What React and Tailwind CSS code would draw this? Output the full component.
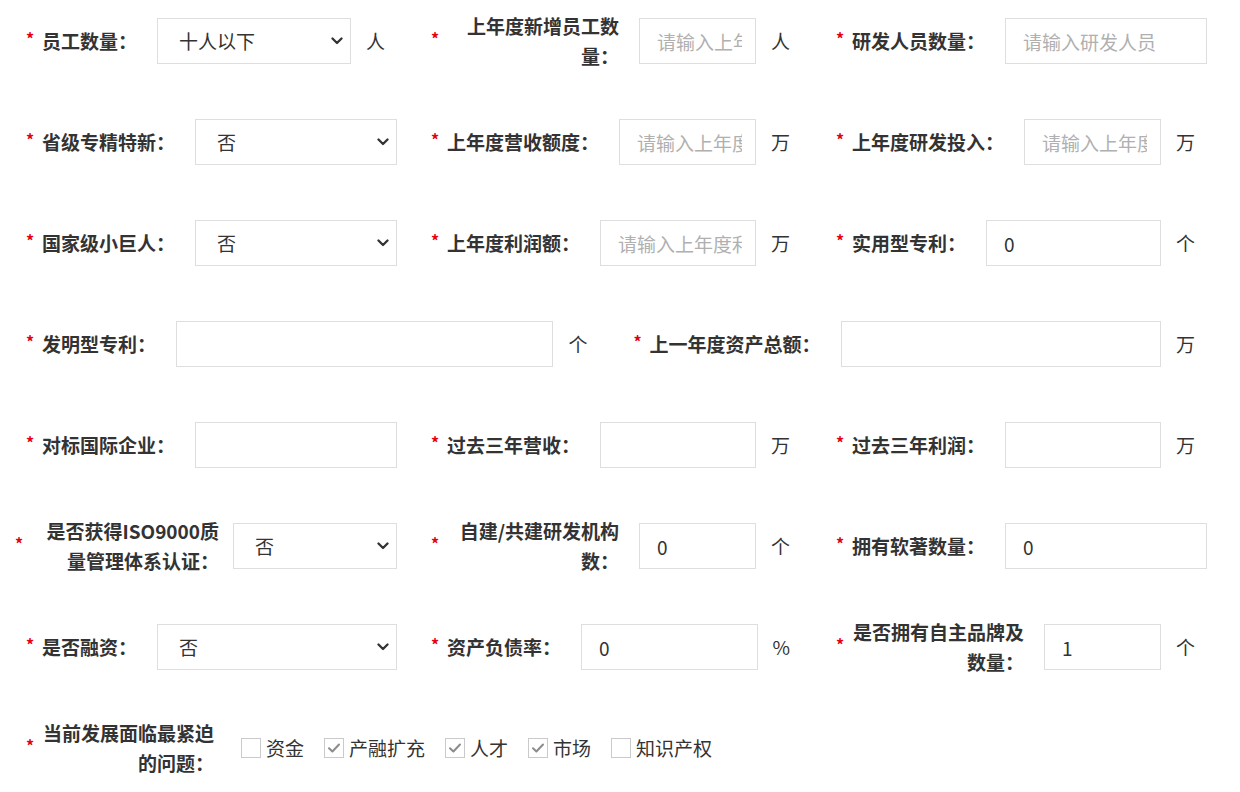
import React, { useState } from 'react';

const FONT = { fontFamily: '"Noto Sans CJK SC", "Noto Sans", sans-serif' };

const rows = [
  [
    { label: '员工数量：', type: 'select', value: '十人以下', options: ['十人以下', '十到五十人', '五十人以上'], unit: '人' },
    { label: '上年度新增员工数量：', placeholder: '请输入上年度新增员工数量', unit: '人' },
    { label: '研发人员数量：', placeholder: '请输入研发人员' },
  ],
  [
    { label: '省级专精特新：', type: 'select', value: '否', options: ['否', '是'] },
    { label: '上年度营收额度：', placeholder: '请输入上年度营收额度', unit: '万' },
    { label: '上年度研发投入：', placeholder: '请输入上年度研发投入', unit: '万' },
  ],
  [
    { label: '国家级小巨人：', type: 'select', value: '否', options: ['否', '是'] },
    { label: '上年度利润额：', placeholder: '请输入上年度利润额', unit: '万' },
    { label: '实用型专利：', value: '0', unit: '个' },
  ],
  [
    { label: '发明型专利：', value: '', unit: '个' },
    { label: '上一年度资产总额：', value: '', unit: '万' },
  ],
  [
    { label: '对标国际企业：', value: '' },
    { label: '过去三年营收：', value: '', unit: '万' },
    { label: '过去三年利润：', value: '', unit: '万' },
  ],
  [
    // long label: pushed a little wider than the others
    { label: '是否获得ISO9000质量管理体系认证：', type: 'select', value: '否', options: ['否', '是'], wide: true },
    { label: '自建/共建研发机构数：', value: '0', unit: '个' },
    { label: '拥有软著数量：', value: '0' },
  ],
  [
    { label: '是否融资：', type: 'select', value: '否', options: ['否', '是'] },
    { label: '资产负债率：', value: '0', unit: '%' },
    { label: '是否拥有自主品牌及数量：', value: '1', unit: '个' },
  ],
];

const ISSUES = [
  { name: '资金', checked: false },
  { name: '产融扩充', checked: true },
  { name: '人才', checked: true },
  { name: '市场', checked: true },
  { name: '知识产权', checked: false },
];

function Required({ wide }) {
  return (
    <span
      className={
        'w-[13px] shrink-0 -translate-x-[3px] text-[16px] font-bold leading-none text-[#e60012] -mt-[6px]' +
        (wide ? ' -ml-[11px]' : '')
      }
    >
      *
    </span>
  );
}

function Label({ children, wide }) {
  return (
    <label
      className={
        'shrink-0 text-right text-[19px] font-bold leading-[30px] text-[#333] ' +
        (wide ? 'max-w-[188px]' : 'max-w-[172px]')
      }
    >
      {children}
    </label>
  );
}

function Field({ f }) {
  const [val, setVal] = useState(f.value ?? '');

  return (
    <div className="flex min-w-0 flex-1 items-center">
      <Required wide={f.wide} />
      <Label wide={f.wide}>{f.label}</Label>
      <div className={'relative h-[46px] min-w-0 flex-1 ' + (f.wide ? 'ml-[14px]' : 'ml-[20px]')}>
        {f.type === 'select' ? (
          <>
            <select
              value={val}
              onChange={(e) => setVal(e.target.value)}
              className="h-full w-full appearance-none border border-[#dedede] bg-white pl-[21px] pr-[30px] text-[19px] text-[#333] outline-none"
            >
              {f.options.map((o) => <option key={o} value={o}>{o}</option>)}
            </select>
            <svg className="pointer-events-none absolute right-[8px] top-1/2 -translate-y-1/2" width="12" height="8" viewBox="0 0 12 8" fill="none">
              <path d="M1.5 1.5L6 6l4.5-4.5" stroke="#333" strokeWidth="2.3" strokeLinecap="round" strokeLinejoin="round" />
            </svg>
          </>
        ) : (
          <input
            value={val}
            onChange={(e) => setVal(e.target.value)}
            placeholder={f.placeholder}
            className="h-full w-full border border-[#dedede] bg-white pl-[17px] pr-[13px] text-[19px] text-[#333] outline-none placeholder:text-[#b0b0b0]"
          />
        )}
      </div>
      {f.unit && <span className="shrink-0 pl-[15px] pr-[12px] text-[19px] text-[#333]">{f.unit}</span>}
    </div>
  );
}

function IssueBox({ item }) {
  const [on, setOn] = useState(item.checked);
  return (
    <label className="flex cursor-pointer items-center gap-[5px]" onClick={() => setOn(!on)}>
      <span className="flex h-[20px] w-[20px] items-center justify-center border border-[#cacaca] bg-white">
        {on && (
          <svg width="14" height="12" viewBox="0 0 14 12" fill="none">
            <path d="M2 6.2l3.4 3.3L12 2.5" stroke="#8c8c8c" strokeWidth="2" strokeLinecap="round" strokeLinejoin="round" />
          </svg>
        )}
      </span>
      <span className="text-[19px] text-[#333]">{item.name}</span>
    </label>
  );
}

export default function App() {
  return (
    <div className="min-h-screen bg-white" style={FONT}>
      <form className="flex w-[1207px] flex-col gap-[55px] pl-[29px] pt-[18px]" onSubmit={(e) => e.preventDefault()}>
        {rows.map((row, i) => (
          <div key={i} className="flex h-[46px] gap-[37px]">
            {row.map((f) => <Field key={f.label} f={f} />)}
          </div>
        ))}

        <div className="flex h-[46px] items-center">
          <Required />
          <Label>当前发展面临最紧迫的问题：</Label>
          <div className="ml-[27px] flex items-center gap-[20px]">
            {ISSUES.map((it) => <IssueBox key={it.name} item={it} />)}
          </div>
        </div>
      </form>
    </div>
  );
}
